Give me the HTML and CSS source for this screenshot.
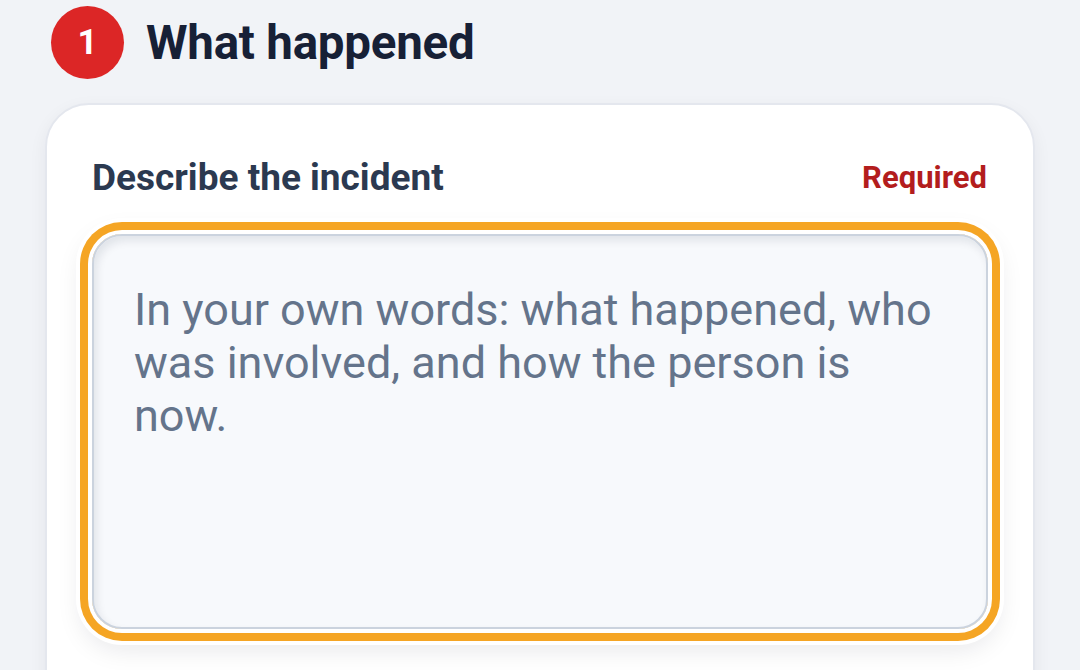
FILE: index.html
```html
<!DOCTYPE html>
<html lang="en">
<head>
<meta charset="utf-8">
<title>What happened</title>
<link rel="stylesheet" href="styles.css">
</head>
<body>
<main class="page">
  <header class="step-header">
    <span class="step-badge">1</span>
    <h1 class="step-title">What happened</h1>
  </header>
  <section class="card">
    <div class="field-head">
      <label class="field-label" for="incident">Describe the incident</label>
      <span class="field-required">Required</span>
    </div>
    <div class="field-ring">
      <textarea id="incident" class="field-input" placeholder="In your own words: what happened, who was involved, and how the person is now."></textarea>
    </div>
  </section>
</main>
</body>
</html>
```

FILE: styles.css
```css
* { box-sizing: border-box; }

html, body {
  margin: 0;
  padding: 0;
  height: 100%;
  overflow: hidden;
  background: #f1f3f7;
  font-family: Roboto, "Liberation Sans", sans-serif;
}

.page {
  padding: 6px 45px 0 45px;
}

.step-header {
  display: flex;
  align-items: center;
  gap: 22px;
  padding-left: 6px;
  height: 73px;
}

.step-badge {
  width: 73px;
  height: 73px;
  border-radius: 50%;
  background: #dc2626;
  color: #ffffff;
  font-weight: 700;
  font-size: 35px;
  display: flex;
  align-items: center;
  justify-content: center;
  flex: none;
}

.step-title {
  margin: 0;
  font-size: 47.5px;
  font-weight: 700;
  letter-spacing: -0.005em;
  color: #172036;
}

.card {
  margin-top: 24px;
  width: 990px;
  min-height: 700px;
  background: #ffffff;
  border: 2px solid #e4e7ee;
  border-radius: 44px;
  box-shadow: 0 6px 18px rgba(30, 41, 59, 0.06);
  padding: 50px 45px 40px 45px;
}

.field-head {
  display: flex;
  align-items: center;
  justify-content: space-between;
  height: 44px;
}

.field-label {
  font-size: 37px;
  font-weight: 700;
  color: #2b3950;
}

.field-required {
  font-size: 31px;
  font-weight: 700;
  color: #b31d1d;
  margin-right: 1px;
}

.field-ring {
  margin-top: 35px;
  border-radius: 30px;
  box-shadow:
    0 0 0 4px #ffffff,
    0 0 0 12px #f5a524,
    0 0 0 16px #ffffff,
    0 10px 26px 10px rgba(15, 23, 42, 0.10);
}

.field-input {
  display: block;
  width: 100%;
  height: 395px;
  margin: 0;
  resize: none;
  border: 2px solid #cbd3de;
  border-radius: 30px;
  background: #f7f9fc;
  box-shadow: inset 3px 5px 9px rgba(15, 23, 42, 0.09);
  padding: 47px 40px;
  font-family: Roboto, "Liberation Sans", sans-serif;
  font-size: 45px;
  line-height: 53px;
  color: #1e293b;
  outline: none;
}

.field-input::placeholder {
  color: #64748b;
  opacity: 1;
}
```
